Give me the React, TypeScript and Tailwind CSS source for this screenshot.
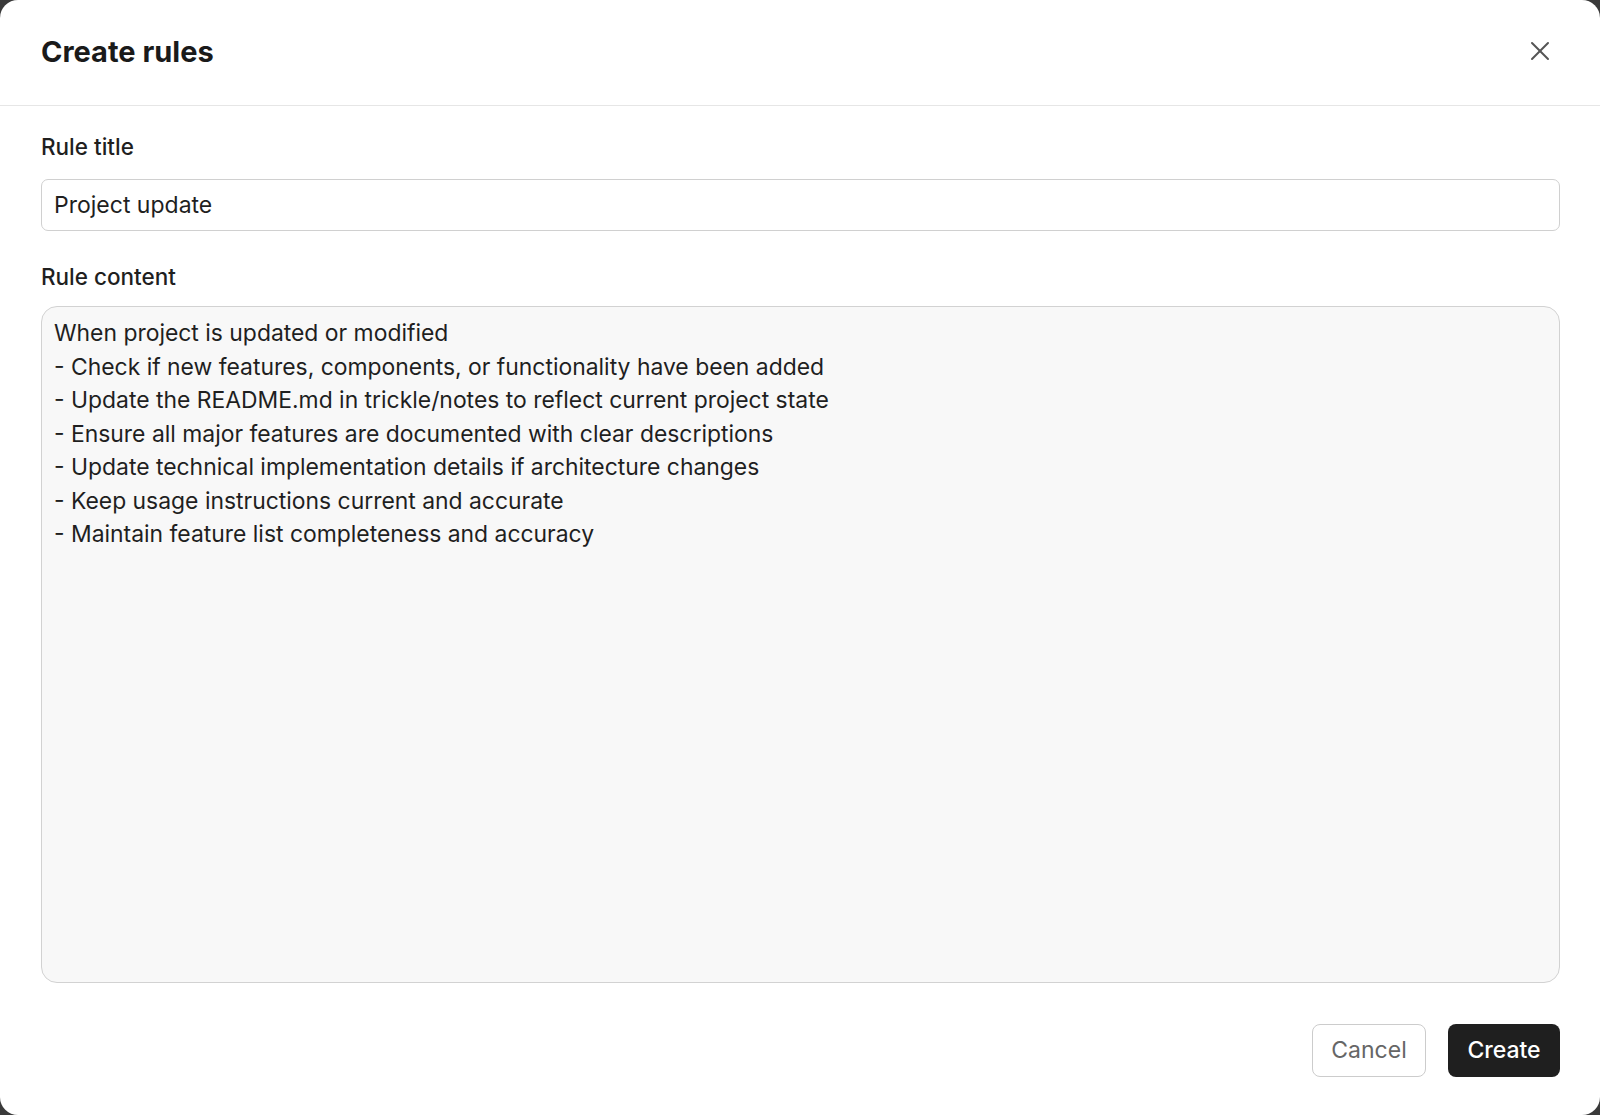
import React from "react";

const content = `When project is updated or modified
- Check if new features, components, or functionality have been added
- Update the README.md in trickle/notes to reflect current project state
- Ensure all major features are documented with clear descriptions
- Update technical implementation details if architecture changes
- Keep usage instructions current and accurate
- Maintain feature list completeness and accuracy`;

function CloseIcon() {
  return (
    <svg width="20" height="20" viewBox="0 0 20 20" fill="none" stroke="currentColor" strokeWidth="2" strokeLinecap="round">
      <path d="M2 2L18 18" />
      <path d="M18 2L2 18" />
    </svg>
  );
}

export default function App() {
  return (
    <div className="h-[1115px] w-[1600px] overflow-hidden bg-[#3a3a3a] font-['Inter',sans-serif]">
      <div className="flex h-full w-full flex-col rounded-[18px] bg-white">
        <div className="flex h-[106px] shrink-0 items-center justify-between border-b border-[#e6e6e6] pl-[41px] pr-[50px]">
          <h1 className="pb-[2px] text-[29px] font-bold text-[#1a1a1a]">Create rules</h1>
          <button className="mb-[4px] text-[#555555]">
            <CloseIcon />
          </button>
        </div>

        <div className="flex flex-1 flex-col pl-[41px] pr-[40px] pt-[26px]">
          <label className="text-[22.5px] leading-[30px] font-medium text-[#1f1f1f]">Rule title</label>
          <input
            defaultValue="Project update"
            className="mt-[17px] h-[52px] w-full rounded-[7px] border-[1.5px] border-[#d0d0d0] bg-white px-[12px] text-[23px] text-[#1f1f1f] outline-none"
          />

          <label className="mt-[31px] text-[22.5px] leading-[30px] font-medium text-[#1f1f1f]">Rule content</label>
          <textarea
            readOnly
            value={content}
            className="mt-[14px] h-[677px] w-full resize-none rounded-[16px] border-[1.5px] border-[#d2d2d2] bg-[#f8f8f8] px-[12px] pt-[10px] text-[22.9px] leading-[33.5px] text-[#1f1f1f] outline-none"
          />

          <div className="mt-[41px] flex justify-end gap-[22px]">
            <button className="h-[53px] w-[114px] rounded-[8px] border-[1.5px] border-[#cccccc] bg-white text-[23px] text-[#666666]">
              Cancel
            </button>
            <button className="h-[53px] w-[112px] rounded-[8px] bg-[#1f1f1f] text-[23px] font-medium text-white">
              Create
            </button>
          </div>
        </div>
      </div>
    </div>
  );
}
